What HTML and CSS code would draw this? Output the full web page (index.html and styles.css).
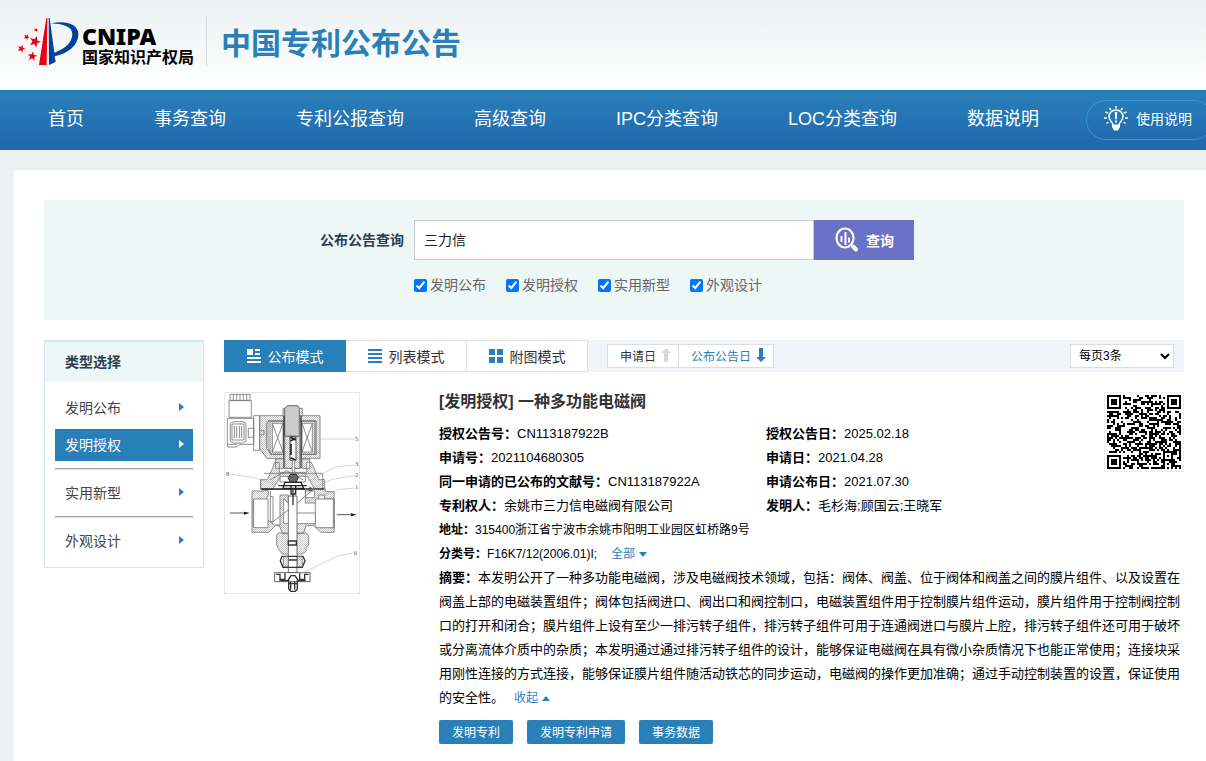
FILE: index.html
```html
<!DOCTYPE html>
<html lang="zh-CN">
<head>
<meta charset="utf-8">
<title>中国专利公布公告</title>
<link rel="stylesheet" href="styles.css">
</head>
<body>
<header class="header">
  <svg class="logo-mark" viewBox="48 48 192 150" aria-hidden="true">
    <defs><path id="star" d="M0-10 2.5-3.2 9.5-3.1 4 1.3 5.9 8.1 0 4.1-5.9 8.1-4 1.3-9.5-3.1-2.5-3.2Z"/></defs>
    <path fill="#e60012" d="M139 54 117 195H140L142 54Z"/>
    <path fill="#00439c" d="M146 54 149 54 163 158C199 145 216 126 217 103 218 83 195 72 153 70 198 61 236 73 235 104 234 137 205 159 164 169L167 186 147 195Z"/>
    <g fill="#e60012">
      <use href="#star" transform="translate(105 125) rotate(20) scale(1.8)"/>
      <use href="#star" transform="translate(97 169) rotate(8) scale(1.5)"/>
      <use href="#star" transform="translate(64 146) rotate(20) scale(1.25)"/>
      <use href="#star" transform="translate(80 111) rotate(25) scale(.95)"/>
      <use href="#star" transform="translate(108 90) rotate(25) scale(.7)"/>
    </g>
  </svg>
  <div class="logo-text"><span class="logo-en">CNIPA</span><span class="logo-cn">国家知识产权局</span></div>
  <h1 class="site-title">中国专利公布公告</h1>
</header>

<nav class="nav">
  <a href="#">首页</a><a href="#">事务查询</a><a href="#">专利公报查询</a><a href="#">高级查询</a><a href="#">IPC分类查询</a><a href="#">LOC分类查询</a><a href="#">数据说明</a>
  <a class="help" href="#">
    <svg width="24" height="26" viewBox="0 0 24 26" fill="none" stroke="#fff" stroke-width="1.5" aria-hidden="true">
      <path d="M9 19C9 16 5 15 5 10.500a7 6.500 0 0 1 14 0C19 15 15 16 15 19"/>
      <path fill="#fff" stroke="none" d="M8 18.500h8v2.500l-2 3.500h-4l-2-3.500ZM10.800 6h2.400l-.5 7.500h-1.400ZM11 14.500h2v2h-2Z"/>
      <path d="M12 0v2.500M5.500 2l1.500 2M18.500 2 17 4M1.500 6l2.500 1M22.500 6 20 7M0 12h3M24 12h-3M2.500 17.500l2-1.500M21.500 17.500l-2-1.500"/>
    </svg>
    <span>使用说明</span>
  </a>
</nav>

<main class="page">
  <form class="search">
    <label class="search-label" for="q">公布公告查询</label>
    <div class="search-body">
      <div class="search-row">
        <input class="search-input" id="q" type="text" value="三力信">
        <button class="search-button" type="button">
          <svg width="26" height="26" viewBox="0 0 26 26" fill="none" stroke="#fff" aria-hidden="true">
            <ellipse cx="11" cy="11" rx="8.500" ry="9.500" stroke-width="2.200"/>
            <path stroke-width="4" stroke-linecap="round" d="m19 19.500 3 3"/>
            <path stroke-width="2" d="M7.500 9v6M11.500 5v13M15 10.500v5"/>
          </svg>
          <span>查询</span>
        </button>
      </div>
      <div class="checks">
        <label><input type="checkbox" checked>发明公布</label>
        <label><input type="checkbox" checked>发明授权</label>
        <label><input type="checkbox" checked>实用新型</label>
        <label><input type="checkbox" checked>外观设计</label>
      </div>
    </div>
  </form>

  <div class="columns">
    <aside class="side">
      <h2 class="side-title">类型选择</h2>
      <div class="side-list">
        <a class="side-item" href="#">发明公布</a>
        <a class="side-item active" href="#">发明授权</a>
        <hr class="side-line">
        <a class="side-item" href="#">实用新型</a>
        <hr class="side-line">
        <a class="side-item" href="#">外观设计</a>
      </div>
    </aside>

    <section class="results">
      <div class="toolbar">
        <div class="tabs">
          <button class="tab active" type="button"><svg width="14" height="14" viewBox="0 0 14 14" fill="currentColor"><path d="M0 0h6v6H0ZM8 0h5v2H8ZM8 4h5v2H8ZM0 8h14v2H0ZM0 12h14v2H0Z"/></svg>公布模式</button>
          <button class="tab" type="button"><svg width="14" height="14" viewBox="0 0 14 14" fill="#2980b9"><path d="M0 0h14v2H0ZM0 4h14v2H0ZM0 8h14v2H0ZM0 12h14v2H0Z"/></svg>列表模式</button>
          <button class="tab" type="button"><svg width="14" height="14" viewBox="0 0 14 14" fill="#2980b9"><path d="M0 0h6v6H0ZM8 0h6v6H8ZM0 8h6v6H0ZM8 8h6v6H8Z"/></svg>附图模式</button>
        </div>
        <div class="sorts">
          <button class="sort" type="button">申请日<svg width="10" height="14" viewBox="0 0 10 14" fill="#d8d8d8"><path d="M5 0 10 5H7v9H3V5H0Z"/></svg></button>
          <button class="sort current" type="button">公布公告日<svg width="10" height="14" viewBox="0 0 10 14" fill="#2980b9"><path d="M5 14 10 9H7V0H3v9H0Z"/></svg></button>
        </div>
        <select class="per-page" aria-label="每页条数"><option>每页3条</option></select>
      </div>

      <article class="item">
        <svg class="figure" viewBox="15 24 402 600" fill="none" stroke="#777" stroke-width="2.500" role="img" aria-label="附图">
          <defs>
            <pattern id="hatch" width="6" height="6" patternUnits="userSpaceOnUse"><path d="M-1 7 7-1" stroke="#8a8a8a" stroke-width="1.500"/></pattern>
            <pattern id="cross" width="6" height="6" patternUnits="userSpaceOnUse"><path d="M-1 7 7-1M-1-1 7 7" stroke="#888" stroke-width="1.300"/></pattern>
          </defs>
          <path d="M30 28h60v18H30ZM40 28v18M50 28v18M60 28v18M70 28v18M80 28v18M27 47h67v50H27ZM22 100h79v78H58l-8 8H22ZM85 130h16v27H85ZM101 92h18v104h-18ZM22 178h30"/>
          <path d="M31 115l10-5h27l10 5v54l-10 5H41l-10-5ZM36 117h36v48H36ZM43 123v36M50 123v36M58 123v36M65 123v36"/>
          <path fill="url(#hatch)" fill-rule="evenodd" d="M119 92H300V220H140L119 190ZM144 108V190L154 208H288V108Z"/>
          <path d="M144 108h144v100H154l-15-18v-75ZM117 137h15v12h-15"/>
          <path fill="url(#hatch)" d="M150 108h40v100h-40ZM244 108h40v100h-40Z"/>
          <path fill="#fff" d="M157 115h32v86h-32ZM246 115h31v86h-31Z"/>
          <path d="M157 115l32 86M189 115l-32 86M246 115l31 86M277 115l-31 86"/>
          <path fill="url(#hatch)" d="M189 70h12v24h-12ZM235 70h12v24h-12Z"/>
          <path fill="#fff" d="M203 62h30l5 8v84h-44V70Z"/><path fill="url(#cross)" d="M203 62h30l5 8v84h-44V70Z"/>
          <path stroke="#333" stroke-width="4" d="M192 94v156M243 94v156"/>
          <path fill="#fff" d="M194 154h46v96h-46Z"/><path fill="url(#hatch)" d="M194 154h46v96h-46Z"/>
          <path fill="#fff" stroke="#333" d="M210 156h18v70h-18Z"/>
          <path stroke="#222" stroke-width="5" d="M211 157l16 8M211 168l16-8M211 218l16 7M213 176v34"/>
          <path fill="#fff" d="M217 226h7v42h-7Z"/>
          <path fill="url(#hatch)" d="M167 222h23v28h-23ZM246 222h23v28h-23ZM164 232h14v30h50v12h-46l-24 38h-36v-28h20l14-30ZM274 232h-14v30h-32v12h34l22 38h30v-28h-18l-12-30Z"/>
          <path d="M132 265h176v48H122v-31M150 285l50-28 50 28M180 265v26h76v-26"/>
          <path fill="#666" stroke="#222" d="m204 278 7-10h17l7 10-7 14h-17Z"/>
          <path stroke="#222" stroke-width="4" d="M195 292h48l8 18h-62ZM124 312h188M175 302h85M213 302v25h14v-25"/>
          <circle cx="271" cy="313" r="5" fill="#111" stroke="#111"/>
          <path fill="url(#hatch)" d="M122 318H96v124h50l20-20h12l10 24h62l8-24h24l20 20h40V320h-26v-8h-60v42h40v-24h18v12h29v86h-48v-18h-90V330h-25v90h-16l-20-14-10 20h-35v-82h38l8-12v-16Z"/>
          <path fill="#fff" d="M101 342h43v86h-43ZM286 342h54v86h-54ZM257 318h26v20h-26Z"/>
          <path fill="#fff" d="M191 340l40 44h55v32H191Z"/>
          <path d="M151 318v92h8V335h-8M154 414l78-60 53-45"/>
          <path fill="url(#hatch)" d="M174 444h84l8 8v28l-8 7v12l-12 8h-60l-12-18-4-9v-28Z"/>
          <path fill="#fff" stroke="#555" d="M205 333h26v230h-26Z"/>
          <path stroke="#333" stroke-width="4" d="M205 468h24v12h-24ZM219 310v50M186 514h63l6 13-8 20h-58l-8-20ZM205 525h27"/>
          <path fill="url(#hatch)" d="M190 515h15v30h-15ZM232 515h15v30h-15Z"/>
          <path fill="#fff" stroke="#444" d="M164 563h106v27H164Z"/>
          <path stroke="#333" stroke-width="4" d="M168 568h12v15h15v-18M266 568h-12v15h-15v-18M178 587h25l10-15h12l10 15h22M206 584v28l6 7h14l6-7v-28M212 590v24M224 590v24M206 596h26"/>
          <g stroke="#aaa" stroke-width="1.500"><path d="M300 162h104M402 240l-56 6-83 43M404 271l-66 12-68 31M404 309l-48 5-97 36M34 268l68 10 80 24M398 504l-48 10-106 52"/></g>
          <path stroke="#333" d="M29 384h45M351 389h46"/><path fill="#111" stroke="none" d="m72 380 17 4-17 5ZM393 385l17 4-17 5Z"/>
          <g class="figure-no"><text x="405" y="168">5</text><text x="405" y="244">3</text><text x="405" y="275">2</text><text x="405" y="313">1</text><text x="18" y="274">8</text><text x="401" y="509">6</text></g>
        </svg>

        <div class="detail">
          <div class="detail-head">
            <div class="detail-info">
              <h2 class="item-title">[发明授权] 一种多功能电磁阀</h2>
              <dl class="facts">
                <div><dt>授权公告号：</dt><dd>CN113187922B</dd></div><div><dt>授权公告日：</dt><dd>2025.02.18</dd></div>
                <div><dt>申请号：</dt><dd>2021104680305</dd></div><div><dt>申请日：</dt><dd>2021.04.28</dd></div>
                <div><dt>同一申请的已公布的文献号：</dt><dd>CN113187922A</dd></div><div><dt>申请公布日：</dt><dd>2021.07.30</dd></div>
                <div><dt>专利权人：</dt><dd>余姚市三力信电磁阀有限公司</dd></div><div><dt>发明人：</dt><dd>毛杉海;顾国云;王晓军</dd></div>
              </dl>
            </div>
            <svg class="qr" viewBox="0 0 37 37" shape-rendering="crispEdges" role="img" aria-label="二维码"><path id="qr-modules"/></svg>
          </div>
          <p class="small"><b>地址：</b>315400浙江省宁波市余姚市阳明工业园区虹桥路9号</p>
          <p class="small"><b>分类号：</b>F16K7/12(2006.01)I;<a class="more" href="#">全部<svg width="8" height="5" viewBox="0 0 8 5" fill="currentColor"><path d="M0 0h8L4 5Z"/></svg></a></p>
          <p class="abstract"><b>摘要：</b>本发明公开了一种多功能电磁阀，涉及电磁阀技术领域，包括：阀体、阀盖、位于阀体和阀盖之间的膜片组件、以及设置在阀盖上部的电磁装置组件；阀体包括阀进口、阀出口和阀控制口，电磁装置组件用于控制膜片组件运动，膜片组件用于控制阀控制口的打开和闭合；膜片组件上设有至少一排污转子组件，排污转子组件可用于连通阀进口与膜片上腔，排污转子组件还可用于破坏或分离流体介质中的杂质；本发明通过通过排污转子组件的设计，能够保证电磁阀在具有微小杂质情况下也能正常使用；连接块采用刚性连接的方式连接，能够保证膜片组件随活动铁芯的同步运动，电磁阀的操作更加准确；通过手动控制装置的设置，保证使用的安全性。<a class="more" href="#">收起<svg width="8" height="5" viewBox="0 0 8 5" fill="currentColor"><path d="M0 5h8L4 0Z"/></svg></a></p>
          <div class="actions">
            <button type="button">发明专利</button><button type="button">发明专利申请</button><button type="button">事务数据</button>
          </div>
        </div>
      </article>
    </section>
  </div>
</main>
<script src="qr.js"></script>
</body>
</html>
```

FILE: styles.css
```css
* { box-sizing: border-box; }
html { overflow: hidden; }
body {
  margin: 0;
  min-height: 100vh;
  background: #ecf0f1;
  color: #000;
  font-family: "Liberation Sans", "Noto Sans CJK SC", sans-serif;
  font-size: 13px;
  text-spacing-trim: space-all;
  overflow: hidden;
}
a { color: inherit; text-decoration: none; }
button, input, select { font-family: inherit; margin: 0; }
h1, h2, p, dl, dd { margin: 0; }
svg { flex: none; }

.header {
  display: flex;
  align-items: flex-start;
  height: 90px;
  padding: 16px 16px 0;
  background: linear-gradient(#ecf0f1, #fff);
}
.logo-mark { width: 64px; height: 50px; }
.logo-text {
  display: flex;
  flex-direction: column;
  padding: 8px 12px 0 2px;
}
.logo-en { font: 900 23px/24px "Noto Sans", sans-serif; }
.logo-cn { font-size: 16px; font-weight: 700; line-height: 20px; }
.site-title {
  height: 50px;
  border-left: 1px solid #d9dcdd;
  padding-left: 14px;
  color: #2980b9;
  font-size: 30px;
  line-height: 56px;
}

.nav {
  display: flex;
  align-items: center;
  height: 60px;
  padding-left: 13px;
  margin-right: -8px;
  background: linear-gradient(#2980b9, #2166ac);
  color: #fff;
  font-size: 18px;
  line-height: 26px;
  white-space: nowrap;
}
.nav a { padding: 0 35px 3px; }
.nav .help {
  display: flex;
  align-items: center;
  gap: 8px;
  height: 40px;
  margin-left: auto;
  padding: 0 21px 2px 17px;
  border: 1px solid #3498db;
  border-radius: 20px;
  font-size: 14px;
}

.page {
  margin: 20px -8px 0 14px;
  min-height: 600px;
  padding: 30px;
  background: #fff;
}
.search {
  display: flex;
  justify-content: center;
  gap: 10px;
  height: 120px;
  padding: 20px 0 20px 6px;
  background: #edf7f5;
}
.search-label {
  color: #2c3e50;
  font-size: 14px;
  font-weight: 700;
  line-height: 40px;
}
.search-row { display: flex; }
.search-input {
  width: 400px;
  height: 40px;
  padding: 0 9px 2px;
  border: 1px solid #ccc;
  color: #222;
  font-size: 14px;
}
.search-button {
  display: flex;
  align-items: center;
  justify-content: center;
  gap: 6px;
  width: 100px;
  border: 0;
  background: #6c71c8;
  color: #fff;
  font-size: 14px;
  font-weight: 700;
}
.checks {
  display: flex;
  gap: 20px;
  margin-top: 15px;
  color: #666;
  font-size: 14px;
  line-height: 20px;
}
.checks label { display: flex; align-items: center; gap: 3px; }
.checks input { width: 13px; height: 13px; accent-color: #0075ff; }

.columns { display: flex; align-items: flex-start; gap: 20px; margin-top: 20px; }
.side { flex: none; width: 160px; border: 1px solid #d4e6f1; border-top-width: 2px; }
.side-title {
  padding-left: 20px;
  background: #edf7f5;
  color: #2c3e50;
  font-size: 14px;
  line-height: 40px;
}
.side-list { padding: 10px; }
.side-item {
  display: flex;
  align-items: center;
  justify-content: space-between;
  height: 32px;
  padding: 0 9px 2px 10px;
  color: #444;
  font-size: 14px;
}
.side-item::after {
  content: "";
  border: 4px solid transparent;
  border-left: 5px solid #2980b9;
  border-right: 0;
}
.side-item.active { margin-top: 5px; background: #2980b9; color: #fff; }
.side-item.active::after { border-left-color: #fff; }
.side-line { height: 2px; margin: 7px 0; border: 0; border-top: 1px solid #999; border-bottom: 1px solid #e4e4e4; }

.results { flex: 1; min-width: 0; }
.toolbar { display: flex; align-items: center; height: 32px; background: #f1f5fa; }
.tabs, .sorts { display: flex; }
.tab {
  display: flex;
  align-items: center;
  justify-content: center;
  gap: 7px;
  width: 121px;
  height: 32px;
  padding: 0 0 1px;
  border: 1px solid #ddd;
  border-left: 0;
  background: #fff;
  color: #333;
  font-size: 14px;
}
.tab.active { width: 122px; border: 0; background: #2980b9; color: #fff; }
.sorts { margin-left: 19px; }
.sort {
  display: flex;
  align-items: center;
  gap: 5px;
  height: 24px;
  padding: 0 7px 2px 12px;
  border: 1px solid #ddd;
  background: #fff;
  color: #333;
  font-size: 12px;
}
.sort.current { border-left: 0; color: #2980b9; }
.per-page {
  width: 104px;
  height: 24px;
  margin: 0 10px 0 auto;
  padding: 0 4px;
  border: 1px solid #ddd;
  background: #fff;
  color: #000;
  font-size: 12px;
}

.item { display: flex; align-items: flex-start; gap: 79px; margin-top: 20px; }
.figure { width: 136px; height: 202px; border: 1px solid #e6e6e6; }
.figure-no { fill: #555; stroke: none; font: 20px "Liberation Serif", serif; }
.detail { flex: 1; min-width: 0; line-height: 24px; }
.detail-head { display: flex; align-items: flex-start; }
.detail-info { flex: 1; }
.item-title { color: #333; font-size: 16px; line-height: 20px; margin-bottom: 10px; }
.facts { display: grid; grid-template-columns: 327px 1fr; }
.facts > div { display: flex; }
.facts dt { font-weight: 700; }
.qr { width: 80px; height: 80px; padding: 2px; border: 1px solid #eee; }
.small { font-size: 12px; }
.more { margin-left: 14px; color: #2980b9; font-size: 12px; }
.abstract .more { margin-left: 10px; }
.more svg { margin-left: 4px; vertical-align: 1px; }
.actions { display: flex; gap: 14px; margin-top: 10px; }
.actions button {
  height: 24px;
  padding: 0 13px 2px;
  border: 0;
  border-radius: 2px;
  background: #2980b9;
  color: #fff;
  font-size: 12px;
}
```

FILE: qr.js
```js
// Fills the 37 x 37 module grid: three finder squares, one alignment square, data modules.
const size = 37;
let seed = 20211;
const square = (x, y, cx, cy) => Math.max(Math.abs(x - cx), Math.abs(y - cy));
let d = "";
for (let y = 0; y < size; y++) {
  for (let x = 0; x < size; x++) {
    seed = (seed * 1103515245 + 12345) % 2147483648;
    let dark = (seed >> 16) % 2 === 0;
    for (const [cx, cy] of [[3, 3], [33, 3], [3, 33]]) {
      const r = square(x, y, cx, cy);
      if (r <= 4) dark = r !== 2 && r !== 4;
    }
    const a = square(x, y, 30, 30);
    if (a <= 2) dark = a !== 1;
    if (dark) d += `M${x} ${y}h1v1h-1z`;
  }
}
document.getElementById("qr-modules").setAttribute("d", d);
```
